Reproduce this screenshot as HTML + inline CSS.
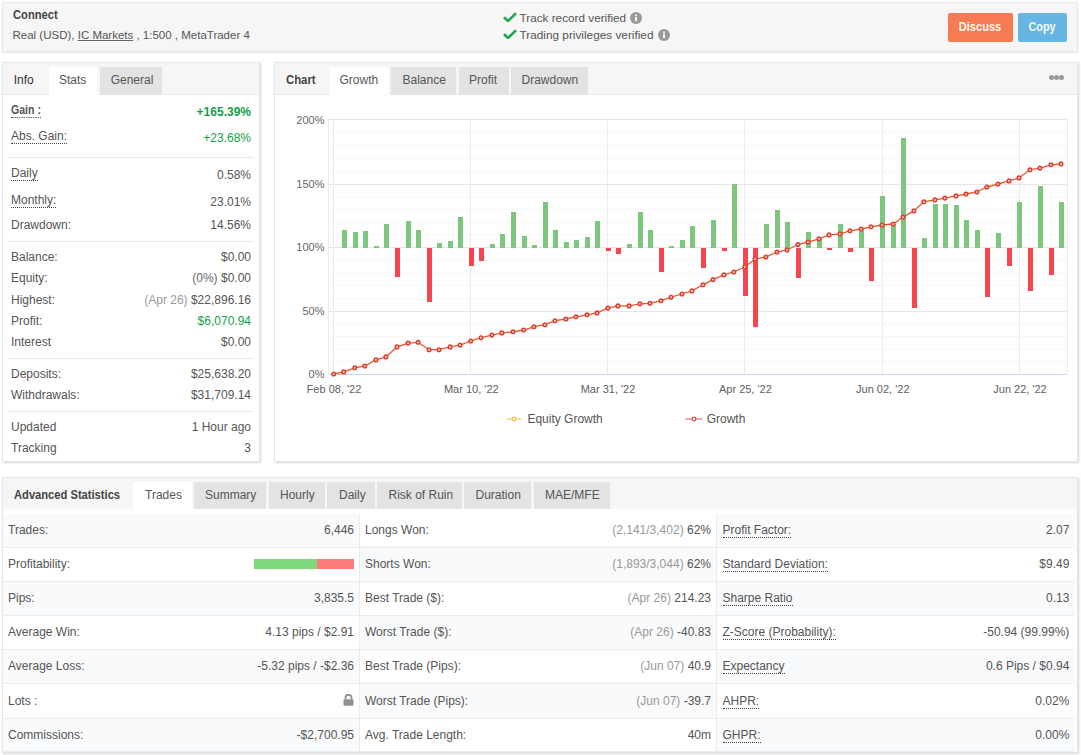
<!DOCTYPE html>
<html><head><meta charset="utf-8"><title>Myfxbook</title>
<style>
*{box-sizing:border-box;margin:0;padding:0}
html,body{width:1081px;height:755px;overflow:hidden;background:#fff;font-family:"Liberation Sans",sans-serif;color:#444}
.t{position:absolute;white-space:nowrap}
u{text-underline-offset:1px}
</style></head><body>
<div style="position:absolute;left:2px;top:2px;width:1076px;height:50px;background:#f6f6f6;border:1px solid #e9e9e9;box-shadow:0 1px 2px rgba(0,0,0,.10)"></div>
<div class="t" style="left:12.5px;top:8.33px;font-size:12px;line-height:15px;font-weight:700;color:#444;transform:scaleX(0.93);transform-origin:0 0">Connect</div>
<div class="t" style="left:12.5px;top:27.92px;font-size:11.5px;line-height:14px;font-weight:400;color:#555;">Real (USD), <u style="text-decoration-color:#666">IC Markets</u> , 1:500 , MetaTrader 4</div>
<div style="position:absolute;left:503px;top:12px;line-height:0"><svg style="display:block" width="14" height="10" viewBox="0 0 14 10"><path d="M1 5.2 L5 9 L13 1.2" fill="none" stroke="#21a557" stroke-width="2.6"/></svg></div>
<div style="position:absolute;left:503px;top:29px;line-height:0"><svg style="display:block" width="14" height="10" viewBox="0 0 14 10"><path d="M1 5.2 L5 9 L13 1.2" fill="none" stroke="#21a557" stroke-width="2.6"/></svg></div>
<div class="t" style="left:519.5px;top:10.32px;font-size:11.75px;line-height:15px;font-weight:400;color:#555;">Track record verified</div>
<div class="t" style="left:519.5px;top:27.52px;font-size:11.8px;line-height:15px;font-weight:400;color:#555;">Trading privileges verified</div>
<svg style="position:absolute;left:630.4px;top:11.5px" width="12" height="12" viewBox="0 0 12 12"><circle cx="6" cy="6" r="6" fill="#999"/><rect x="5.1" y="5" width="1.8" height="4.2" fill="#fff"/><rect x="5.1" y="2.6" width="1.8" height="1.6" fill="#fff"/></svg>
<svg style="position:absolute;left:658px;top:28.700000000000003px" width="12" height="12" viewBox="0 0 12 12"><circle cx="6" cy="6" r="6" fill="#999"/><rect x="5.1" y="5" width="1.8" height="4.2" fill="#fff"/><rect x="5.1" y="2.6" width="1.8" height="1.6" fill="#fff"/></svg>
<div style="position:absolute;left:948px;top:13px;width:64.5px;height:28.5px;background:#f77b52;border-radius:2px"></div>
<div style="position:absolute;left:1018px;top:13px;width:49px;height:28.5px;background:#66b5e2;border-radius:2px"></div>
<div class="t" style="left:980.3px;top:20.03px;font-size:12px;line-height:15px;font-weight:700;color:#fff8ef;transform:translateX(-50%) scaleX(0.92)">Discuss</div>
<div class="t" style="left:1042.2px;top:20.03px;font-size:12px;line-height:15px;font-weight:700;color:#f4fbff;transform:translateX(-50%) scaleX(0.9)">Copy</div>
<div style="position:absolute;left:2px;top:62px;width:258px;height:400px;background:#fff;border:1px solid #e6e6e6;box-shadow:1px 1px 2px rgba(0,0,0,.16)"></div>
<div style="position:absolute;left:3px;top:63px;width:256px;height:31.5px;background:#f6f6f6;border-bottom:1px solid #ececec"></div>
<div style="position:absolute;left:49px;top:67px;width:47.5px;height:28px;background:#fff"></div>
<div style="position:absolute;left:99.5px;top:67px;width:62.5px;height:27.5px;background:#e3e3e3"></div>
<div class="t" style="left:13.7px;top:73.33px;font-size:12px;line-height:15px;font-weight:400;color:#333;">Info</div>
<div class="t" style="left:59px;top:73.33px;font-size:12px;line-height:15px;font-weight:400;color:#555;">Stats</div>
<div class="t" style="left:110.7px;top:73.33px;font-size:12px;line-height:15px;font-weight:400;color:#555;">General</div>
<div class="t" style="left:11px;top:102.73px;font-size:12px;line-height:15px;font-weight:700;color:#555;"><span style="border-bottom:1px dotted #444;display:inline-block;line-height:13px;transform:scaleX(0.88);transform-origin:0 0">Gain :</span></div>
<div class="t" style="right:830px;top:104.73px;font-size:12px;line-height:15px;font-weight:700;color:#13a04a;">+165.39%</div>
<div class="t" style="left:11px;top:129.33px;font-size:12px;line-height:15px;font-weight:400;color:#555;"><span style="border-bottom:1px dotted #444">Abs. Gain:</span></div>
<div class="t" style="right:830px;top:131.33px;font-size:12px;line-height:15px;font-weight:400;color:#13a04a;">+23.68%</div>
<div style="position:absolute;left:8px;top:157px;width:246px;height:1px;background:#e9e9e9"></div>
<div class="t" style="left:11px;top:166.03px;font-size:12px;line-height:15px;font-weight:400;color:#555;"><span style="border-bottom:1px dotted #444">Daily</span></div>
<div class="t" style="right:830px;top:168.03px;font-size:12px;line-height:15px;font-weight:400;color:#555;">0.58%</div>
<div class="t" style="left:11px;top:192.63px;font-size:12px;line-height:15px;font-weight:400;color:#555;"><span style="border-bottom:1px dotted #444">Monthly:</span></div>
<div class="t" style="right:830px;top:194.63px;font-size:12px;line-height:15px;font-weight:400;color:#555;">23.01%</div>
<div class="t" style="left:11px;top:217.63px;font-size:12px;line-height:15px;font-weight:400;color:#555;">Drawdown:</div>
<div class="t" style="right:830px;top:217.63px;font-size:12px;line-height:15px;font-weight:400;color:#555;">14.56%</div>
<div style="position:absolute;left:8px;top:241px;width:246px;height:1px;background:#e9e9e9"></div>
<div class="t" style="left:11px;top:249.63px;font-size:12px;line-height:15px;font-weight:400;color:#555;">Balance:</div>
<div class="t" style="right:830px;top:249.63px;font-size:12px;line-height:15px;font-weight:400;color:#555;">$0.00</div>
<div class="t" style="left:11px;top:270.53px;font-size:12px;line-height:15px;font-weight:400;color:#555;">Equity:</div>
<div class="t" style="right:830px;top:270.53px;font-size:12px;line-height:15px;font-weight:400;color:#555;"><span style="color:#6a6a6a">(0%)</span> $0.00</div>
<div class="t" style="left:11px;top:293.03px;font-size:12px;line-height:15px;font-weight:400;color:#555;">Highest:</div>
<div class="t" style="right:830px;top:293.03px;font-size:12px;line-height:15px;font-weight:400;color:#555;"><span style="color:#999">(Apr 26)</span> $22,896.16</div>
<div class="t" style="left:11px;top:313.63px;font-size:12px;line-height:15px;font-weight:400;color:#555;">Profit:</div>
<div class="t" style="right:830px;top:313.63px;font-size:12px;line-height:15px;font-weight:400;color:#12a04a;">$6,070.94</div>
<div class="t" style="left:11px;top:335.13px;font-size:12px;line-height:15px;font-weight:400;color:#555;">Interest</div>
<div class="t" style="right:830px;top:335.13px;font-size:12px;line-height:15px;font-weight:400;color:#555;">$0.00</div>
<div style="position:absolute;left:8px;top:358px;width:246px;height:1px;background:#e9e9e9"></div>
<div class="t" style="left:11px;top:367.33px;font-size:12px;line-height:15px;font-weight:400;color:#555;">Deposits:</div>
<div class="t" style="right:830px;top:367.33px;font-size:12px;line-height:15px;font-weight:400;color:#555;">$25,638.20</div>
<div class="t" style="left:11px;top:388.03px;font-size:12px;line-height:15px;font-weight:400;color:#555;">Withdrawals:</div>
<div class="t" style="right:830px;top:388.03px;font-size:12px;line-height:15px;font-weight:400;color:#555;">$31,709.14</div>
<div style="position:absolute;left:8px;top:411px;width:246px;height:1px;background:#e9e9e9"></div>
<div class="t" style="left:11px;top:420.13px;font-size:12px;line-height:15px;font-weight:400;color:#555;">Updated</div>
<div class="t" style="right:830px;top:420.13px;font-size:12px;line-height:15px;font-weight:400;color:#555;">1 Hour ago</div>
<div class="t" style="left:11px;top:440.73px;font-size:12px;line-height:15px;font-weight:400;color:#555;">Tracking</div>
<div class="t" style="right:830px;top:440.73px;font-size:12px;line-height:15px;font-weight:400;color:#555;">3</div>
<div style="position:absolute;left:274px;top:62px;width:804px;height:400px;background:#fff;border:1px solid #e6e6e6;box-shadow:1px 1px 2px rgba(0,0,0,.16)"></div>
<div style="position:absolute;left:275px;top:63px;width:802px;height:31.5px;background:#f6f6f6;border-bottom:1px solid #ececec"></div>
<div style="position:absolute;left:329.5px;top:67px;width:59.19999999999999px;height:28px;background:#fff"></div>
<div style="position:absolute;left:391.4px;top:67px;width:64.40000000000003px;height:27.5px;background:#e3e3e3"></div>
<div style="position:absolute;left:458.5px;top:67px;width:50.39999999999998px;height:27.5px;background:#e3e3e3"></div>
<div style="position:absolute;left:511.2px;top:67px;width:77.30000000000001px;height:27.5px;background:#e3e3e3"></div>
<div class="t" style="left:286px;top:72.83px;font-size:12px;line-height:15px;font-weight:700;color:#444;transform:scaleX(0.945);transform-origin:0 0">Chart</div>
<div class="t" style="left:339.5px;top:73.33px;font-size:12px;line-height:15px;font-weight:400;color:#555;">Growth</div>
<div class="t" style="left:402.5px;top:73.33px;font-size:12px;line-height:15px;font-weight:400;color:#555;">Balance</div>
<div class="t" style="left:469px;top:73.33px;font-size:12px;line-height:15px;font-weight:400;color:#555;">Profit</div>
<div class="t" style="left:521.5px;top:73.33px;font-size:12px;line-height:15px;font-weight:400;color:#555;">Drawdown</div>
<div style="position:absolute;left:1048.6px;top:74.5px;width:5px;height:5px;border-radius:50%;background:#999"></div>
<div style="position:absolute;left:1054.0px;top:74.5px;width:5px;height:5px;border-radius:50%;background:#999"></div>
<div style="position:absolute;left:1059.3999999999999px;top:74.5px;width:5px;height:5px;border-radius:50%;background:#999"></div>
<svg style="position:absolute;left:0;top:0" width="1081" height="755" viewBox="0 0 1081 755"><line x1="328.5" x2="1067" y1="132.5" y2="132.5" stroke="#f8f8f8" stroke-width="1"/><line x1="328.5" x2="1067" y1="145.5" y2="145.5" stroke="#f8f8f8" stroke-width="1"/><line x1="328.5" x2="1067" y1="158.5" y2="158.5" stroke="#f8f8f8" stroke-width="1"/><line x1="328.5" x2="1067" y1="171.5" y2="171.5" stroke="#f8f8f8" stroke-width="1"/><line x1="328.5" x2="1067" y1="197.5" y2="197.5" stroke="#f8f8f8" stroke-width="1"/><line x1="328.5" x2="1067" y1="209.5" y2="209.5" stroke="#f8f8f8" stroke-width="1"/><line x1="328.5" x2="1067" y1="222.5" y2="222.5" stroke="#f8f8f8" stroke-width="1"/><line x1="328.5" x2="1067" y1="234.5" y2="234.5" stroke="#f8f8f8" stroke-width="1"/><line x1="328.5" x2="1067" y1="260.5" y2="260.5" stroke="#f8f8f8" stroke-width="1"/><line x1="328.5" x2="1067" y1="273.5" y2="273.5" stroke="#f8f8f8" stroke-width="1"/><line x1="328.5" x2="1067" y1="285.5" y2="285.5" stroke="#f8f8f8" stroke-width="1"/><line x1="328.5" x2="1067" y1="298.5" y2="298.5" stroke="#f8f8f8" stroke-width="1"/><line x1="328.5" x2="1067" y1="324.5" y2="324.5" stroke="#f8f8f8" stroke-width="1"/><line x1="328.5" x2="1067" y1="336.5" y2="336.5" stroke="#f8f8f8" stroke-width="1"/><line x1="328.5" x2="1067" y1="349.5" y2="349.5" stroke="#f8f8f8" stroke-width="1"/><line x1="328.5" x2="1067" y1="361.5" y2="361.5" stroke="#f8f8f8" stroke-width="1"/><line x1="328.5" x2="1067" y1="119.5" y2="119.5" stroke="#e6e6e6" stroke-width="1"/><line x1="328.5" x2="1067" y1="184.5" y2="184.5" stroke="#e6e6e6" stroke-width="1"/><line x1="328.5" x2="1067" y1="247.5" y2="247.5" stroke="#e6e6e6" stroke-width="1"/><line x1="328.5" x2="1067" y1="311.5" y2="311.5" stroke="#e6e6e6" stroke-width="1"/><line x1="328.5" x2="328.5" y1="119" y2="374" stroke="#ececec" stroke-width="1"/><line x1="333.5" x2="333.5" y1="119" y2="374" stroke="#ececec" stroke-width="1"/><line x1="470.5" x2="470.5" y1="119" y2="374" stroke="#ececec" stroke-width="1"/><line x1="607.5" x2="607.5" y1="119" y2="374" stroke="#ececec" stroke-width="1"/><line x1="744.5" x2="744.5" y1="119" y2="374" stroke="#ececec" stroke-width="1"/><line x1="882.5" x2="882.5" y1="119" y2="374" stroke="#ececec" stroke-width="1"/><line x1="1019.5" x2="1019.5" y1="119" y2="374" stroke="#ececec" stroke-width="1"/><line x1="1067.5" x2="1067.5" y1="119" y2="374" stroke="#ececec" stroke-width="1"/><line x1="328.5" x2="1067" y1="374.5" y2="374.5" stroke="#ccd6eb" stroke-width="1"/><rect x="342" y="230" width="5" height="18" fill="#7cc67e"/><rect x="353" y="232" width="5" height="16" fill="#7cc67e"/><rect x="363" y="231" width="5" height="17" fill="#7cc67e"/><rect x="374" y="246" width="5" height="2" fill="#7cc67e"/><rect x="384" y="224" width="5" height="24" fill="#7cc67e"/><rect x="395" y="248" width="5" height="29" fill="#f7454f"/><rect x="406" y="221" width="5" height="27" fill="#7cc67e"/><rect x="416" y="230" width="5" height="18" fill="#7cc67e"/><rect x="427" y="248" width="5" height="54" fill="#f7454f"/><rect x="437" y="243" width="5" height="5" fill="#7cc67e"/><rect x="448" y="241" width="5" height="7" fill="#7cc67e"/><rect x="458" y="217" width="5" height="31" fill="#7cc67e"/><rect x="469" y="248" width="5" height="18" fill="#f7454f"/><rect x="479" y="248" width="5" height="13" fill="#f7454f"/><rect x="490" y="244" width="5" height="4" fill="#7cc67e"/><rect x="500" y="234" width="5" height="14" fill="#7cc67e"/><rect x="511" y="212" width="5" height="36" fill="#7cc67e"/><rect x="522" y="236" width="5" height="12" fill="#7cc67e"/><rect x="532" y="245" width="5" height="3" fill="#7cc67e"/><rect x="543" y="202" width="5" height="46" fill="#7cc67e"/><rect x="553" y="230" width="5" height="18" fill="#7cc67e"/><rect x="564" y="242" width="5" height="6" fill="#7cc67e"/><rect x="574" y="240" width="5" height="8" fill="#7cc67e"/><rect x="585" y="237" width="5" height="11" fill="#7cc67e"/><rect x="595" y="221" width="5" height="27" fill="#7cc67e"/><rect x="606" y="248" width="5" height="3" fill="#f7454f"/><rect x="616" y="248" width="5" height="6" fill="#f7454f"/><rect x="627" y="244" width="5" height="4" fill="#7cc67e"/><rect x="638" y="212" width="5" height="36" fill="#7cc67e"/><rect x="648" y="230" width="5" height="18" fill="#7cc67e"/><rect x="659" y="248" width="5" height="24" fill="#f7454f"/><rect x="669" y="246" width="5" height="2" fill="#7cc67e"/><rect x="680" y="240" width="5" height="8" fill="#7cc67e"/><rect x="690" y="226" width="5" height="22" fill="#7cc67e"/><rect x="701" y="248" width="5" height="20" fill="#f7454f"/><rect x="711" y="220" width="5" height="28" fill="#7cc67e"/><rect x="722" y="248" width="5" height="3" fill="#f7454f"/><rect x="732" y="184" width="5" height="64" fill="#7cc67e"/><rect x="743" y="248" width="5" height="48" fill="#f7454f"/><rect x="753" y="248" width="5" height="79" fill="#f7454f"/><rect x="764" y="224" width="5" height="24" fill="#7cc67e"/><rect x="775" y="210" width="5" height="38" fill="#7cc67e"/><rect x="785" y="222" width="5" height="26" fill="#7cc67e"/><rect x="796" y="248" width="5" height="30" fill="#f7454f"/><rect x="806" y="232" width="5" height="16" fill="#7cc67e"/><rect x="817" y="238" width="5" height="10" fill="#7cc67e"/><rect x="827" y="248" width="5" height="2" fill="#f7454f"/><rect x="838" y="224" width="5" height="24" fill="#7cc67e"/><rect x="848" y="248" width="5" height="4" fill="#f7454f"/><rect x="859" y="228" width="5" height="20" fill="#7cc67e"/><rect x="869" y="248" width="5" height="33" fill="#f7454f"/><rect x="880" y="196" width="5" height="52" fill="#7cc67e"/><rect x="891" y="224" width="5" height="24" fill="#7cc67e"/><rect x="901" y="138" width="5" height="110" fill="#7cc67e"/><rect x="912" y="248" width="5" height="60" fill="#f7454f"/><rect x="922" y="238" width="5" height="10" fill="#7cc67e"/><rect x="933" y="204" width="5" height="44" fill="#7cc67e"/><rect x="943" y="204" width="5" height="44" fill="#7cc67e"/><rect x="954" y="205" width="5" height="43" fill="#7cc67e"/><rect x="964" y="220" width="5" height="28" fill="#7cc67e"/><rect x="975" y="230" width="5" height="18" fill="#7cc67e"/><rect x="985" y="248" width="5" height="49" fill="#f7454f"/><rect x="996" y="233" width="5" height="15" fill="#7cc67e"/><rect x="1007" y="248" width="5" height="18" fill="#f7454f"/><rect x="1017" y="202" width="5" height="46" fill="#7cc67e"/><rect x="1028" y="248" width="5" height="43" fill="#f7454f"/><rect x="1038" y="186" width="5" height="62" fill="#7cc67e"/><rect x="1049" y="248" width="5" height="27" fill="#f7454f"/><rect x="1059" y="202" width="5" height="46" fill="#7cc67e"/><path d="M333.7 374.0 L343.7 371.9 L354.8 367.8 L364.8 366.0 L375.9 359.9 L385.9 356.9 L397.0 346.9 L408.1 343.1 L418.1 342.3 L429.0 349.7 L439.0 349.7 L450.1 346.9 L460.1 345.1 L470.8 341.0 L481.0 337.7 L491.9 335.1 L501.9 332.9 L513.0 331.8 L523.6 330.0 L533.9 326.8 L545.0 324.7 L555.0 320.7 L565.9 319.0 L575.9 316.8 L587.0 314.8 L597.0 312.9 L607.9 308.1 L617.9 305.9 L629.0 305.9 L639.9 303.8 L649.9 303.3 L661.0 300.7 L671.0 297.2 L681.9 294.0 L691.9 290.9 L703.0 284.8 L713.0 279.6 L723.9 274.8 L733.9 272.0 L744.8 267.0 L755.0 259.1 L765.9 257.0 L777.0 252.0 L787.0 250.0 L797.9 244.5 L807.9 242.1 L819.0 238.8 L829.0 234.9 L839.9 233.8 L849.9 230.8 L861.0 229.0 L871.0 226.8 L881.9 225.0 L893.0 224.0 L903.0 217.0 L913.9 210.9 L923.8 201.8 L934.9 199.9 L944.9 198.1 L956.0 195.9 L966.0 194.0 L976.9 192.0 L986.9 187.0 L998.0 184.0 L1009.0 180.9 L1019.0 177.9 L1029.9 169.8 L1039.9 168.1 L1051.0 164.8 L1061.0 163.9" fill="none" stroke="#e2572e" stroke-width="1.3"/><circle cx="333.7" cy="374.0" r="1.7" fill="#fff" stroke="#dc4535" stroke-width="1.7"/><circle cx="343.7" cy="371.9" r="1.7" fill="#fff" stroke="#dc4535" stroke-width="1.7"/><circle cx="354.8" cy="367.8" r="1.7" fill="#fff" stroke="#dc4535" stroke-width="1.7"/><circle cx="364.8" cy="366.0" r="1.7" fill="#fff" stroke="#dc4535" stroke-width="1.7"/><circle cx="375.9" cy="359.9" r="1.7" fill="#fff" stroke="#dc4535" stroke-width="1.7"/><circle cx="385.9" cy="356.9" r="1.7" fill="#fff" stroke="#dc4535" stroke-width="1.7"/><circle cx="397.0" cy="346.9" r="1.7" fill="#fff" stroke="#dc4535" stroke-width="1.7"/><circle cx="408.1" cy="343.1" r="1.7" fill="#fff" stroke="#dc4535" stroke-width="1.7"/><circle cx="418.1" cy="342.3" r="1.7" fill="#fff" stroke="#dc4535" stroke-width="1.7"/><circle cx="429.0" cy="349.7" r="1.7" fill="#fff" stroke="#dc4535" stroke-width="1.7"/><circle cx="439.0" cy="349.7" r="1.7" fill="#fff" stroke="#dc4535" stroke-width="1.7"/><circle cx="450.1" cy="346.9" r="1.7" fill="#fff" stroke="#dc4535" stroke-width="1.7"/><circle cx="460.1" cy="345.1" r="1.7" fill="#fff" stroke="#dc4535" stroke-width="1.7"/><circle cx="470.8" cy="341.0" r="1.7" fill="#fff" stroke="#dc4535" stroke-width="1.7"/><circle cx="481.0" cy="337.7" r="1.7" fill="#fff" stroke="#dc4535" stroke-width="1.7"/><circle cx="491.9" cy="335.1" r="1.7" fill="#fff" stroke="#dc4535" stroke-width="1.7"/><circle cx="501.9" cy="332.9" r="1.7" fill="#fff" stroke="#dc4535" stroke-width="1.7"/><circle cx="513.0" cy="331.8" r="1.7" fill="#fff" stroke="#dc4535" stroke-width="1.7"/><circle cx="523.6" cy="330.0" r="1.7" fill="#fff" stroke="#dc4535" stroke-width="1.7"/><circle cx="533.9" cy="326.8" r="1.7" fill="#fff" stroke="#dc4535" stroke-width="1.7"/><circle cx="545.0" cy="324.7" r="1.7" fill="#fff" stroke="#dc4535" stroke-width="1.7"/><circle cx="555.0" cy="320.7" r="1.7" fill="#fff" stroke="#dc4535" stroke-width="1.7"/><circle cx="565.9" cy="319.0" r="1.7" fill="#fff" stroke="#dc4535" stroke-width="1.7"/><circle cx="575.9" cy="316.8" r="1.7" fill="#fff" stroke="#dc4535" stroke-width="1.7"/><circle cx="587.0" cy="314.8" r="1.7" fill="#fff" stroke="#dc4535" stroke-width="1.7"/><circle cx="597.0" cy="312.9" r="1.7" fill="#fff" stroke="#dc4535" stroke-width="1.7"/><circle cx="607.9" cy="308.1" r="1.7" fill="#fff" stroke="#dc4535" stroke-width="1.7"/><circle cx="617.9" cy="305.9" r="1.7" fill="#fff" stroke="#dc4535" stroke-width="1.7"/><circle cx="629.0" cy="305.9" r="1.7" fill="#fff" stroke="#dc4535" stroke-width="1.7"/><circle cx="639.9" cy="303.8" r="1.7" fill="#fff" stroke="#dc4535" stroke-width="1.7"/><circle cx="649.9" cy="303.3" r="1.7" fill="#fff" stroke="#dc4535" stroke-width="1.7"/><circle cx="661.0" cy="300.7" r="1.7" fill="#fff" stroke="#dc4535" stroke-width="1.7"/><circle cx="671.0" cy="297.2" r="1.7" fill="#fff" stroke="#dc4535" stroke-width="1.7"/><circle cx="681.9" cy="294.0" r="1.7" fill="#fff" stroke="#dc4535" stroke-width="1.7"/><circle cx="691.9" cy="290.9" r="1.7" fill="#fff" stroke="#dc4535" stroke-width="1.7"/><circle cx="703.0" cy="284.8" r="1.7" fill="#fff" stroke="#dc4535" stroke-width="1.7"/><circle cx="713.0" cy="279.6" r="1.7" fill="#fff" stroke="#dc4535" stroke-width="1.7"/><circle cx="723.9" cy="274.8" r="1.7" fill="#fff" stroke="#dc4535" stroke-width="1.7"/><circle cx="733.9" cy="272.0" r="1.7" fill="#fff" stroke="#dc4535" stroke-width="1.7"/><circle cx="744.8" cy="267.0" r="1.7" fill="#fff" stroke="#dc4535" stroke-width="1.7"/><circle cx="755.0" cy="259.1" r="1.7" fill="#fff" stroke="#dc4535" stroke-width="1.7"/><circle cx="765.9" cy="257.0" r="1.7" fill="#fff" stroke="#dc4535" stroke-width="1.7"/><circle cx="777.0" cy="252.0" r="1.7" fill="#fff" stroke="#dc4535" stroke-width="1.7"/><circle cx="787.0" cy="250.0" r="1.7" fill="#fff" stroke="#dc4535" stroke-width="1.7"/><circle cx="797.9" cy="244.5" r="1.7" fill="#fff" stroke="#dc4535" stroke-width="1.7"/><circle cx="807.9" cy="242.1" r="1.7" fill="#fff" stroke="#dc4535" stroke-width="1.7"/><circle cx="819.0" cy="238.8" r="1.7" fill="#fff" stroke="#dc4535" stroke-width="1.7"/><circle cx="829.0" cy="234.9" r="1.7" fill="#fff" stroke="#dc4535" stroke-width="1.7"/><circle cx="839.9" cy="233.8" r="1.7" fill="#fff" stroke="#dc4535" stroke-width="1.7"/><circle cx="849.9" cy="230.8" r="1.7" fill="#fff" stroke="#dc4535" stroke-width="1.7"/><circle cx="861.0" cy="229.0" r="1.7" fill="#fff" stroke="#dc4535" stroke-width="1.7"/><circle cx="871.0" cy="226.8" r="1.7" fill="#fff" stroke="#dc4535" stroke-width="1.7"/><circle cx="881.9" cy="225.0" r="1.7" fill="#fff" stroke="#dc4535" stroke-width="1.7"/><circle cx="893.0" cy="224.0" r="1.7" fill="#fff" stroke="#dc4535" stroke-width="1.7"/><circle cx="903.0" cy="217.0" r="1.7" fill="#fff" stroke="#dc4535" stroke-width="1.7"/><circle cx="913.9" cy="210.9" r="1.7" fill="#fff" stroke="#dc4535" stroke-width="1.7"/><circle cx="923.8" cy="201.8" r="1.7" fill="#fff" stroke="#dc4535" stroke-width="1.7"/><circle cx="934.9" cy="199.9" r="1.7" fill="#fff" stroke="#dc4535" stroke-width="1.7"/><circle cx="944.9" cy="198.1" r="1.7" fill="#fff" stroke="#dc4535" stroke-width="1.7"/><circle cx="956.0" cy="195.9" r="1.7" fill="#fff" stroke="#dc4535" stroke-width="1.7"/><circle cx="966.0" cy="194.0" r="1.7" fill="#fff" stroke="#dc4535" stroke-width="1.7"/><circle cx="976.9" cy="192.0" r="1.7" fill="#fff" stroke="#dc4535" stroke-width="1.7"/><circle cx="986.9" cy="187.0" r="1.7" fill="#fff" stroke="#dc4535" stroke-width="1.7"/><circle cx="998.0" cy="184.0" r="1.7" fill="#fff" stroke="#dc4535" stroke-width="1.7"/><circle cx="1009.0" cy="180.9" r="1.7" fill="#fff" stroke="#dc4535" stroke-width="1.7"/><circle cx="1019.0" cy="177.9" r="1.7" fill="#fff" stroke="#dc4535" stroke-width="1.7"/><circle cx="1029.9" cy="169.8" r="1.7" fill="#fff" stroke="#dc4535" stroke-width="1.7"/><circle cx="1039.9" cy="168.1" r="1.7" fill="#fff" stroke="#dc4535" stroke-width="1.7"/><circle cx="1051.0" cy="164.8" r="1.7" fill="#fff" stroke="#dc4535" stroke-width="1.7"/><circle cx="1061.0" cy="163.9" r="1.7" fill="#fff" stroke="#dc4535" stroke-width="1.7"/><line x1="506.5" x2="521.5" y1="419" y2="419" stroke="#f8cf6a" stroke-width="1.3"/><circle cx="514" cy="419" r="1.8" fill="#fff" stroke="#f3bf45" stroke-width="1.3"/><line x1="685.5" x2="702" y1="419" y2="419" stroke="#ee6f78" stroke-width="1.3"/><circle cx="694" cy="419" r="1.8" fill="#fff" stroke="#e24b55" stroke-width="1.3"/></svg>
<div class="t" style="right:756.5px;top:112.80px;font-size:11px;line-height:14px;font-weight:400;color:#666;">200%</div>
<div class="t" style="right:756.5px;top:177.30px;font-size:11px;line-height:14px;font-weight:400;color:#666;">150%</div>
<div class="t" style="right:756.5px;top:240.30px;font-size:11px;line-height:14px;font-weight:400;color:#666;">100%</div>
<div class="t" style="right:756.5px;top:304.30px;font-size:11px;line-height:14px;font-weight:400;color:#666;">50%</div>
<div class="t" style="right:756.5px;top:367.30px;font-size:11px;line-height:14px;font-weight:400;color:#666;">0%</div>
<div class="t" style="left:334px;top:382.30px;font-size:11px;line-height:14px;font-weight:400;color:#606060;transform:translateX(-50%)">Feb 08, '22</div>
<div class="t" style="left:471.3px;top:382.30px;font-size:11px;line-height:14px;font-weight:400;color:#606060;transform:translateX(-50%)">Mar 10, '22</div>
<div class="t" style="left:608px;top:382.30px;font-size:11px;line-height:14px;font-weight:400;color:#606060;transform:translateX(-50%)">Mar 31, '22</div>
<div class="t" style="left:745.4px;top:382.30px;font-size:11px;line-height:14px;font-weight:400;color:#606060;transform:translateX(-50%)">Apr 25, '22</div>
<div class="t" style="left:882.8px;top:382.30px;font-size:11px;line-height:14px;font-weight:400;color:#606060;transform:translateX(-50%)">Jun 02, '22</div>
<div class="t" style="left:1020px;top:382.30px;font-size:11px;line-height:14px;font-weight:400;color:#606060;transform:translateX(-50%)">Jun 22, '22</div>
<div class="t" style="left:527.4px;top:412.13px;font-size:12px;line-height:15px;font-weight:400;color:#555;">Equity Growth</div>
<div class="t" style="left:706.7px;top:412.13px;font-size:12px;line-height:15px;font-weight:400;color:#555;">Growth</div>
<div style="position:absolute;left:2px;top:477px;width:1076px;height:276px;background:#fff;border:1px solid #e6e6e6;box-shadow:1px 1px 2px rgba(0,0,0,.16)"></div>
<div style="position:absolute;left:3px;top:478px;width:1074px;height:30.5px;background:#f6f6f6"></div>
<div style="position:absolute;left:133.2px;top:482px;width:58.900000000000006px;height:27px;background:#fff"></div>
<div style="position:absolute;left:194.1px;top:482px;width:72.29999999999998px;height:26.5px;background:#e3e3e3"></div>
<div style="position:absolute;left:268.7px;top:482px;width:56.0px;height:26.5px;background:#e3e3e3"></div>
<div style="position:absolute;left:327px;top:482px;width:47.5px;height:26.5px;background:#e3e3e3"></div>
<div style="position:absolute;left:376.6px;top:482px;width:85.0px;height:26.5px;background:#e3e3e3"></div>
<div style="position:absolute;left:463.9px;top:482px;width:67.60000000000002px;height:26.5px;background:#e3e3e3"></div>
<div style="position:absolute;left:533.5px;top:482px;width:76.20000000000005px;height:26.5px;background:#e3e3e3"></div>
<div class="t" style="left:14px;top:487.63px;font-size:12px;line-height:15px;font-weight:700;color:#444;transform:scaleX(0.93);transform-origin:0 0">Advanced Statistics</div>
<div class="t" style="left:145px;top:488.13px;font-size:12px;line-height:15px;font-weight:400;color:#555;">Trades</div>
<div class="t" style="left:205px;top:488.13px;font-size:12px;line-height:15px;font-weight:400;color:#555;">Summary</div>
<div class="t" style="left:280px;top:488.13px;font-size:12px;line-height:15px;font-weight:400;color:#555;">Hourly</div>
<div class="t" style="left:339px;top:488.13px;font-size:12px;line-height:15px;font-weight:400;color:#555;">Daily</div>
<div class="t" style="left:388.5px;top:488.13px;font-size:12px;line-height:15px;font-weight:400;color:#555;">Risk of Ruin</div>
<div class="t" style="left:475.5px;top:488.13px;font-size:12px;line-height:15px;font-weight:400;color:#555;">Duration</div>
<div class="t" style="left:545px;top:488.13px;font-size:12px;line-height:15px;font-weight:400;color:#555;">MAE/MFE</div>
<div style="position:absolute;left:3px;top:514px;width:356px;height:34px;background:#f9fafc;border-bottom:1px solid #e9ecef"></div>
<div style="position:absolute;left:3px;top:548px;width:356px;height:34px;background:#fff;border-bottom:1px solid #e9ecef"></div>
<div style="position:absolute;left:3px;top:582px;width:356px;height:34px;background:#f9fafc;border-bottom:1px solid #e9ecef"></div>
<div style="position:absolute;left:3px;top:616px;width:356px;height:34px;background:#fff;border-bottom:1px solid #e9ecef"></div>
<div style="position:absolute;left:3px;top:650px;width:356px;height:34px;background:#f9fafc;border-bottom:1px solid #e9ecef"></div>
<div style="position:absolute;left:3px;top:684px;width:356px;height:35px;background:#fff;border-bottom:1px solid #e9ecef"></div>
<div style="position:absolute;left:3px;top:719px;width:356px;height:33px;background:#f9fafc;border-bottom:1px solid #e9ecef"></div>
<div style="position:absolute;left:360px;top:514px;width:356px;height:34px;background:#fff;border-bottom:1px solid #e9ecef"></div>
<div style="position:absolute;left:360px;top:548px;width:356px;height:34px;background:#f9fafc;border-bottom:1px solid #e9ecef"></div>
<div style="position:absolute;left:360px;top:582px;width:356px;height:34px;background:#fff;border-bottom:1px solid #e9ecef"></div>
<div style="position:absolute;left:360px;top:616px;width:356px;height:34px;background:#f9fafc;border-bottom:1px solid #e9ecef"></div>
<div style="position:absolute;left:360px;top:650px;width:356px;height:34px;background:#fff;border-bottom:1px solid #e9ecef"></div>
<div style="position:absolute;left:360px;top:684px;width:356px;height:35px;background:#f9fafc;border-bottom:1px solid #e9ecef"></div>
<div style="position:absolute;left:360px;top:719px;width:356px;height:33px;background:#fff;border-bottom:1px solid #e9ecef"></div>
<div style="position:absolute;left:717px;top:514px;width:357px;height:34px;background:#f9fafc;border-bottom:1px solid #e9ecef"></div>
<div style="position:absolute;left:717px;top:548px;width:357px;height:34px;background:#fff;border-bottom:1px solid #e9ecef"></div>
<div style="position:absolute;left:717px;top:582px;width:357px;height:34px;background:#f9fafc;border-bottom:1px solid #e9ecef"></div>
<div style="position:absolute;left:717px;top:616px;width:357px;height:34px;background:#fff;border-bottom:1px solid #e9ecef"></div>
<div style="position:absolute;left:717px;top:650px;width:357px;height:34px;background:#f9fafc;border-bottom:1px solid #e9ecef"></div>
<div style="position:absolute;left:717px;top:684px;width:357px;height:35px;background:#fff;border-bottom:1px solid #e9ecef"></div>
<div style="position:absolute;left:717px;top:719px;width:357px;height:33px;background:#f9fafc;border-bottom:1px solid #e9ecef"></div>
<div style="position:absolute;left:359px;top:514px;width:1px;height:238px;background:#e9ecef"></div>
<div style="position:absolute;left:716px;top:514px;width:1px;height:238px;background:#e9ecef"></div>
<div class="t" style="left:8px;top:523.33px;font-size:12px;line-height:15px;font-weight:400;color:#555;">Trades:</div>
<div class="t" style="right:727px;top:523.33px;font-size:12px;line-height:15px;font-weight:400;color:#555;">6,446</div>
<div class="t" style="left:8px;top:557.33px;font-size:12px;line-height:15px;font-weight:400;color:#555;">Profitability:</div>
<div class="t" style="left:8px;top:591.33px;font-size:12px;line-height:15px;font-weight:400;color:#555;">Pips:</div>
<div class="t" style="right:727px;top:591.33px;font-size:12px;line-height:15px;font-weight:400;color:#555;">3,835.5</div>
<div class="t" style="left:8px;top:625.33px;font-size:12px;line-height:15px;font-weight:400;color:#555;">Average Win:</div>
<div class="t" style="right:727px;top:625.33px;font-size:12px;line-height:15px;font-weight:400;color:#555;">4.13 pips / $2.91</div>
<div class="t" style="left:8px;top:659.33px;font-size:12px;line-height:15px;font-weight:400;color:#555;">Average Loss:</div>
<div class="t" style="right:727px;top:659.33px;font-size:12px;line-height:15px;font-weight:400;color:#555;">-5.32 pips / -$2.36</div>
<div class="t" style="left:8px;top:693.83px;font-size:12px;line-height:15px;font-weight:400;color:#555;">Lots :</div>
<div class="t" style="left:8px;top:727.83px;font-size:12px;line-height:15px;font-weight:400;color:#555;">Commissions:</div>
<div class="t" style="right:727px;top:727.83px;font-size:12px;line-height:15px;font-weight:400;color:#555;">-$2,700.95</div>
<div class="t" style="left:365px;top:523.33px;font-size:12px;line-height:15px;font-weight:400;color:#555;">Longs Won:</div>
<div class="t" style="right:370px;top:523.33px;font-size:12px;line-height:15px;font-weight:400;color:#555;"><span style="color:#999">(2,141/3,402)</span> 62%</div>
<div class="t" style="left:365px;top:557.33px;font-size:12px;line-height:15px;font-weight:400;color:#555;">Shorts Won:</div>
<div class="t" style="right:370px;top:557.33px;font-size:12px;line-height:15px;font-weight:400;color:#555;"><span style="color:#999">(1,893/3,044)</span> 62%</div>
<div class="t" style="left:365px;top:591.33px;font-size:12px;line-height:15px;font-weight:400;color:#555;">Best Trade ($):</div>
<div class="t" style="right:370px;top:591.33px;font-size:12px;line-height:15px;font-weight:400;color:#555;"><span style="color:#999">(Apr 26)</span> 214.23</div>
<div class="t" style="left:365px;top:625.33px;font-size:12px;line-height:15px;font-weight:400;color:#555;">Worst Trade ($):</div>
<div class="t" style="right:370px;top:625.33px;font-size:12px;line-height:15px;font-weight:400;color:#555;"><span style="color:#999">(Apr 26)</span> -40.83</div>
<div class="t" style="left:365px;top:659.33px;font-size:12px;line-height:15px;font-weight:400;color:#555;">Best Trade (Pips):</div>
<div class="t" style="right:370px;top:659.33px;font-size:12px;line-height:15px;font-weight:400;color:#555;"><span style="color:#999">(Jun 07)</span> 40.9</div>
<div class="t" style="left:365px;top:693.83px;font-size:12px;line-height:15px;font-weight:400;color:#555;">Worst Trade (Pips):</div>
<div class="t" style="right:370px;top:693.83px;font-size:12px;line-height:15px;font-weight:400;color:#555;"><span style="color:#999">(Jun 07)</span> -39.7</div>
<div class="t" style="left:365px;top:727.83px;font-size:12px;line-height:15px;font-weight:400;color:#555;">Avg. Trade Length:</div>
<div class="t" style="right:370px;top:727.83px;font-size:12px;line-height:15px;font-weight:400;color:#555;">40m</div>
<div class="t" style="left:722.5px;top:523.33px;font-size:12px;line-height:15px;font-weight:400;color:#555;"><span style="border-bottom:1px dotted #444">Profit Factor:</span></div>
<div class="t" style="right:11.700000000000045px;top:523.33px;font-size:12px;line-height:15px;font-weight:400;color:#555;">2.07</div>
<div class="t" style="left:722.5px;top:557.33px;font-size:12px;line-height:15px;font-weight:400;color:#555;"><span style="border-bottom:1px dotted #444">Standard Deviation:</span></div>
<div class="t" style="right:11.700000000000045px;top:557.33px;font-size:12px;line-height:15px;font-weight:400;color:#555;">$9.49</div>
<div class="t" style="left:722.5px;top:591.33px;font-size:12px;line-height:15px;font-weight:400;color:#555;"><span style="border-bottom:1px dotted #444">Sharpe Ratio</span></div>
<div class="t" style="right:11.700000000000045px;top:591.33px;font-size:12px;line-height:15px;font-weight:400;color:#555;">0.13</div>
<div class="t" style="left:722.5px;top:625.33px;font-size:12px;line-height:15px;font-weight:400;color:#555;"><span style="border-bottom:1px dotted #444">Z-Score (Probability):</span></div>
<div class="t" style="right:11.700000000000045px;top:625.33px;font-size:12px;line-height:15px;font-weight:400;color:#555;">-50.94 (99.99%)</div>
<div class="t" style="left:722.5px;top:659.33px;font-size:12px;line-height:15px;font-weight:400;color:#555;"><span style="border-bottom:1px dotted #444">Expectancy</span></div>
<div class="t" style="right:11.700000000000045px;top:659.33px;font-size:12px;line-height:15px;font-weight:400;color:#555;">0.6 Pips / $0.94</div>
<div class="t" style="left:722.5px;top:693.83px;font-size:12px;line-height:15px;font-weight:400;color:#555;"><span style="border-bottom:1px dotted #444">AHPR:</span></div>
<div class="t" style="right:11.700000000000045px;top:693.83px;font-size:12px;line-height:15px;font-weight:400;color:#555;">0.02%</div>
<div class="t" style="left:722.5px;top:727.83px;font-size:12px;line-height:15px;font-weight:400;color:#555;"><span style="border-bottom:1px dotted #444">GHPR:</span></div>
<div class="t" style="right:11.700000000000045px;top:727.83px;font-size:12px;line-height:15px;font-weight:400;color:#555;">0.00%</div>
<div style="position:absolute;left:254px;top:559px;width:63px;height:10px;background:#7ddb7c"></div>
<div style="position:absolute;left:317px;top:559px;width:37px;height:10px;background:#fd7c7c"></div>
<svg style="position:absolute;left:343px;top:694px" width="11" height="12" viewBox="0 0 11 12"><path d="M2.5 5.5 V3.8 A3 3 0 0 1 8.5 3.8 V5.5" fill="none" stroke="#919191" stroke-width="1.8"/><rect x="0.5" y="5.2" width="10" height="6.5" rx="1" fill="#919191"/></svg>
</body></html>
